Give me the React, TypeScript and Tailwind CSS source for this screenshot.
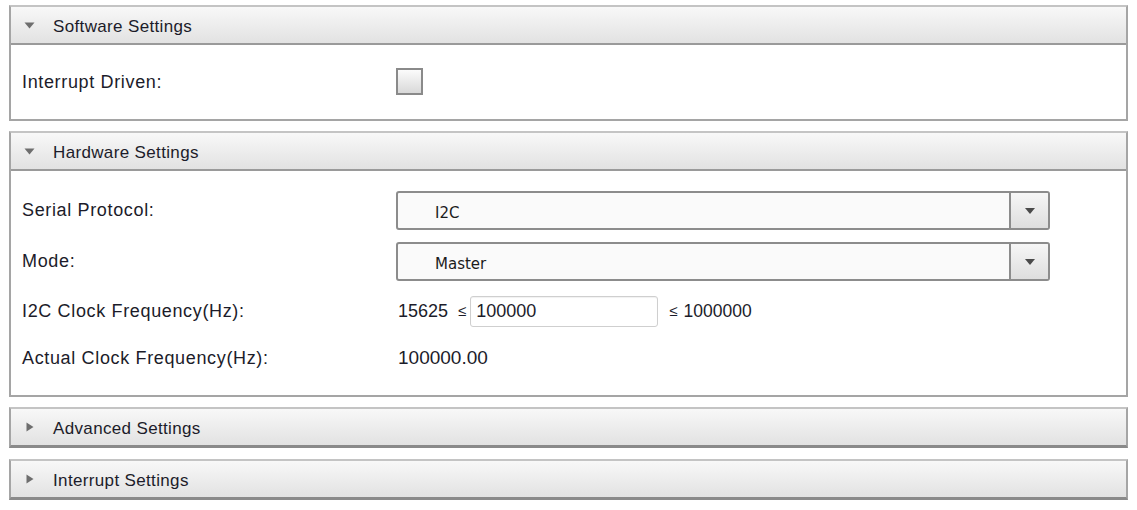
import React from "react";

const labelFont = { fontFamily: '"Liberation Sans", Arial, sans-serif' };

function Caret({ open }: { open: boolean }) {
  return open ? (
    <svg width="11" height="7" viewBox="0 0 11 7" className="shrink-0">
      <polygon points="0.5,0.5 10.5,0.5 5.5,6.5" fill="#6e6e6e" />
    </svg>
  ) : (
    <svg width="8" height="10" viewBox="0 0 8 10" className="shrink-0 ml-[2px]">
      <polygon points="0.5,0.5 7.5,5 0.5,9.5" fill="#6e6e6e" />
    </svg>
  );
}

function Header({ title, open }: { title: string; open: boolean }) {
  return (
    <div
      className={`flex items-center bg-gradient-to-b from-[#f8f8f8] to-[#e2e2e2] ${
        open ? "h-[38px] border-b-2 border-[#9a9a9a]" : "h-[36px]"
      }`}
    >
      <div className="w-[42px] pl-[13px] flex items-center">
        <Caret open={open} />
      </div>
      <span className="text-[17px] tracking-[0.35px] text-[#1c1c2a] pt-[3px]" style={labelFont}>
        {title}
      </span>
    </div>
  );
}

function Select({ value }: { value: string }) {
  return (
    <div className="flex h-[39px] w-[654px] rounded-[3px] border-2 border-[#8c8c8c] bg-[#fafafa] overflow-hidden">
      <div
        className="flex-1 flex items-center pl-[37px] pt-[6px] text-[15px] text-[#1c1c1c]"
        style={{ fontFamily: '"DejaVu Sans", Verdana, sans-serif' }}
      >
        {value}
      </div>
      <div className="w-[39px] border-l-2 border-[#8c8c8c] bg-gradient-to-b from-[#f6f6f6] to-[#dedede] flex items-center justify-center">
        <svg width="10" height="6" viewBox="0 0 10 6">
          <polygon points="0,0 10,0 5,6" fill="#4a4a4a" />
        </svg>
      </div>
    </div>
  );
}

function Row({ label, children, className }: { label: string; children: React.ReactNode; className: string }) {
  return (
    <div className={`flex items-center ${className}`}>
      <div className="w-[374px] text-[18px] tracking-[0.65px] text-[#1c1c2a]" style={labelFont}>
        {label}
      </div>
      {children}
    </div>
  );
}

export default function App() {
  return (
    <div className="w-[1137px] h-[510px] bg-white px-[9px] pt-[5px] flex flex-col gap-[10px]" style={labelFont}>
      <div className="border-2 border-[#a5a5a5] border-t-[#c4c4c4]">
        <Header title="Software Settings" open />
        <div className="h-[74px] flex items-center pl-[11px]">
          <div className="w-[374px] text-[18px] tracking-[0.65px] text-[#1c1c2a]">Interrupt Driven:</div>
          <div className="w-[27px] h-[27px] -mt-[2px] border-2 border-[#8a8a8a] bg-gradient-to-b from-[#fbfbfb] to-[#d9d9d9]" />
        </div>
      </div>

      <div className="border-2 border-[#a5a5a5] border-t-[#c4c4c4]">
        <Header title="Hardware Settings" open />
        <div className="pl-[11px] pt-[20px] pb-[25px]">
          <Row label="Serial Protocol:" className="h-[39px]">
            <Select value="I2C" />
          </Row>
          <Row label="Mode:" className="h-[39px] mt-[12px]">
            <Select value="Master" />
          </Row>
          <Row label="I2C Clock Frequency(Hz):" className="h-[31px] mt-[15px]">
            <span className="text-[18px] text-[#1c1c2a] pl-[2px]">15625</span>
            <span className="text-[15px] text-[#1c1c2a] ml-[10px] mr-[4px]">≤</span>
            <div className="w-[188px] h-[31px] border border-[#cfcfcf] rounded-[3px] flex items-center pl-[5px] text-[18px] text-[#1c1c2a] shadow-[inset_0_1px_1px_rgba(0,0,0,0.06)]">
              100000
            </div>
            <span className="text-[15px] text-[#1c1c2a] ml-[11px] mr-[6px]">≤</span>
            <span className="text-[17.5px] text-[#1c1c2a]">1000000</span>
          </Row>
          <Row label="Actual Clock Frequency(Hz):" className="h-[24px] mt-[19px]">
            <span className="text-[19px] text-[#1c1c2a] pl-[2px]">100000.00</span>
          </Row>
        </div>
      </div>

      <div className="border-2 border-[#a5a5a5] border-t-[#c4c4c4] border-b-[3px] border-b-[#8a8a8a]">
        <Header title="Advanced Settings" open={false} />
      </div>

      <div className="border-2 border-[#a5a5a5] border-t-[#c4c4c4] border-b-[3px] border-b-[#8a8a8a] mt-px">
        <Header title="Interrupt Settings" open={false} />
      </div>
    </div>
  );
}
